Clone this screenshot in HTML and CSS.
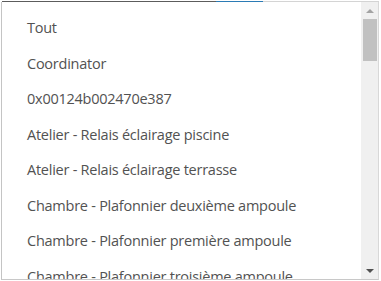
FILE: index.html
```html
<!DOCTYPE html>
<html lang="fr">
<head>
<meta charset="utf-8">
<link rel="stylesheet" href="styles.css">
</head>
<body>
<div class="page">
  <div class="underlay">
    <span class="seg seg-dark"></span>
    <span class="seg seg-blue"></span>
    <span class="seg seg-light"></span>
  </div>
  <div class="dropdown">
    <ul class="list">
      <li>Tout</li>
      <li>Coordinator</li>
      <li>0x00124b002470e387</li>
      <li>Atelier - Relais éclairage piscine</li>
      <li>Atelier - Relais éclairage terrasse</li>
      <li>Chambre - Plafonnier deuxième ampoule</li>
      <li>Chambre - Plafonnier première ampoule</li>
      <li>Chambre - Plafonnier troisième ampoule</li>
    </ul>
    <div class="scrollbar">
      <div class="sb-btn"><span class="arrow-up"></span></div>
      <div class="sb-track"><div class="sb-thumb"></div></div>
      <div class="sb-btn"><span class="arrow-down"></span></div>
    </div>
  </div>
</div>
</body>
</html>
```
FILE: styles.css
```css
* { box-sizing: border-box; }
html, body { margin: 0; padding: 0; background: #fff; }
.page {
  width: 381px;
  height: 281px;
  overflow: hidden;
  padding: 1px 2px 0 1px;
  display: flex;
  flex-direction: column;
}
.underlay {
  display: flex;
  height: 1px;
  margin-left: 1px;
}
.seg { display: block; height: 1px; }
.seg-dark { width: 214px; background: #5c5c5c; }
.seg-blue { width: 47px; background: #2b7bb5; }
.seg-light { flex: 1; background: #d4d4d4; }
.dropdown {
  height: 278px;
  display: flex;
  background: #fff;
  border-left: 1px solid #c4c4c4;
  border-bottom: 1px solid #c8c8c8;
  border-right: 1px solid #d8d8d8;
}
.list {
  flex: 1;
  margin: 0;
  padding: 8.5px 0 0 0;
  list-style: none;
  overflow: hidden;
  font-family: "Open Sans", "Noto Sans", sans-serif;
  font-size: 14.5px;
  letter-spacing: -0.25px;
  color: #525252;
}
.list li {
  line-height: 20px;
  padding: 7.75px 0 7.75px 25px;
  white-space: nowrap;
}
.scrollbar {
  width: 17px;
  background: #f0f0f0;
  display: flex;
  flex-direction: column;
}
.sb-btn {
  height: 17px;
  display: flex;
  align-items: center;
  justify-content: center;
}
.sb-track {
  flex: 1;
  padding: 0 1px 0 2px;
}
.sb-thumb {
  height: 42px;
  background: #c1c1c1;
}
.arrow-up {
  width: 0; height: 0;
  border-left: 4px solid transparent;
  border-right: 4px solid transparent;
  border-bottom: 4px solid #a3a3a3;
}
.arrow-down {
  width: 0; height: 0;
  border-left: 4px solid transparent;
  border-right: 4px solid transparent;
  border-top: 4px solid #505050;
}
```
